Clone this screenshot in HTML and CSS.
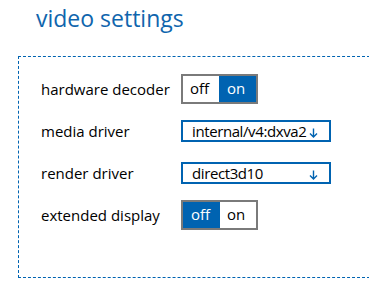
FILE: index.html
```html
<!DOCTYPE html>
<html>
<head>
<meta charset="utf-8">
<link rel="stylesheet" href="styles.css">
</head>
<body>
<h1 class="title">video settings</h1>
<div class="panel">
  <div class="row">
    <span class="label">hardware decoder</span>
    <div class="toggle">
      <span class="seg">off</span>
      <span class="seg active">on</span>
    </div>
  </div>
  <div class="row">
    <span class="label">media driver</span>
    <div class="select">
      <span class="value">internal/v4:dxva2</span>
      <svg class="arrow" width="9" height="10" viewBox="0 0 9 10"><path d="M4.5 0.5V9M1 5.5L4.5 9L8 5.5" fill="none" stroke="#0063b1" stroke-width="1.4"/></svg>
    </div>
  </div>
  <div class="row">
    <span class="label">render driver</span>
    <div class="select">
      <span class="value">direct3d10</span>
      <svg class="arrow" width="9" height="10" viewBox="0 0 9 10"><path d="M4.5 0.5V9M1 5.5L4.5 9L8 5.5" fill="none" stroke="#0063b1" stroke-width="1.4"/></svg>
    </div>
  </div>
  <div class="row">
    <span class="label">extended display</span>
    <div class="toggle">
      <span class="seg active">off</span>
      <span class="seg">on</span>
    </div>
  </div>
</div>
</body>
</html>
```

FILE: styles.css
```css
html, body {
  margin: 0;
  padding: 0;
  background: #ffffff;
  overflow: hidden;
}
body {
  width: 369px;
  height: 291px;
  font-family: "Open Sans", "Noto Sans", sans-serif;
  color: #000;
}
.title {
  margin: 0;
  padding: 2px 0 0 36px;
  height: 34px;
  font-size: 23px;
  font-weight: 400;
  line-height: 32px;
  color: #0f65ad;
}
.panel {
  margin: 20px 0 0 18px;
  width: 351px;
  height: 209px;
  border: 1px dashed #0063b1;
  border-right: none;
  box-sizing: content-box;
  padding-top: 11px;
}
.row {
  display: flex;
  align-items: center;
  height: 42px;
  padding-left: 22px;
}
.label {
  width: 140px;
  font-size: 15px;
}
.toggle {
  display: flex;
  height: 26px;
  border: 2px solid #7a7a7a;
  width: 73px;
}
.seg {
  flex: 1;
  font-size: 15px;
  line-height: 25px;
  padding-left: 7px;
  color: #000;
}
.seg.active {
  background: #0063b1;
  color: #fff;
  padding-left: 8px;
}
.select {
  position: relative;
  width: 146px;
  height: 18px;
  border: 2px solid #0063b1;
  overflow: hidden;
}
.value {
  display: block;
  padding-left: 9px;
  font-size: 15px;
  line-height: 18px;
  letter-spacing: -0.4px;
  white-space: nowrap;
}
.arrow {
  position: absolute;
  right: 11px;
  top: 6px;
}
```
